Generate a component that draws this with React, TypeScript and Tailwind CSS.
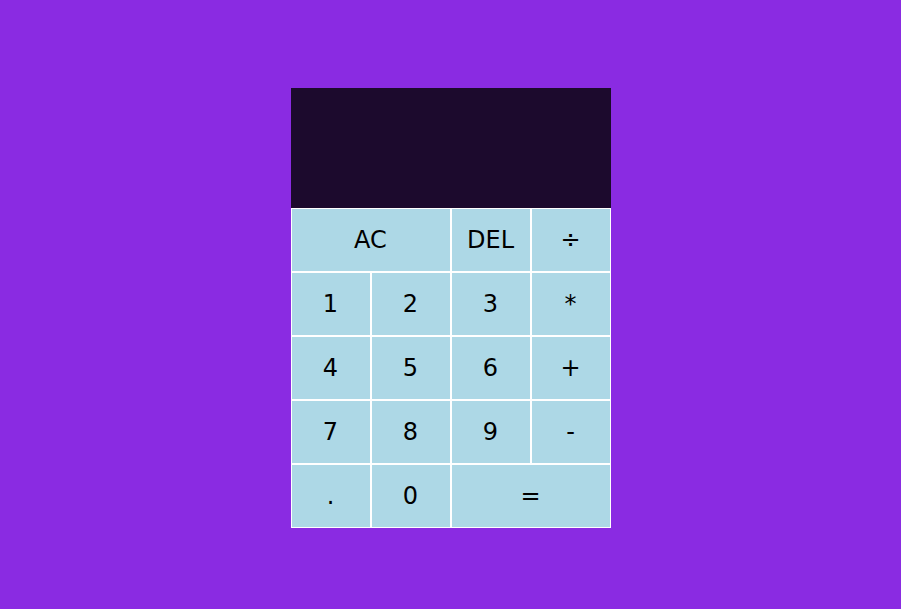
import React from "react";

const buttons: { label: string; span?: boolean }[] = [
  { label: "AC", span: true },
  { label: "DEL" },
  { label: "÷" },
  { label: "1" },
  { label: "2" },
  { label: "3" },
  { label: "*" },
  { label: "4" },
  { label: "5" },
  { label: "6" },
  { label: "+" },
  { label: "7" },
  { label: "8" },
  { label: "9" },
  { label: "-" },
  { label: "." },
  { label: "0" },
  { label: "=", span: true },
];

export default function App() {
  return (
    <div
      className="min-h-screen w-full bg-[#8a2be2] flex justify-center pt-[88px]"
      style={{ fontFamily: '"DejaVu Sans", sans-serif' }}
    >
      <div className="grid grid-cols-[repeat(4,80px)] grid-rows-[120px_repeat(5,64px)] h-fit">
        <div className="col-span-4 bg-[#1c0a2d]" />
        {buttons.map((b, i) => (
          <button
            key={i}
            className={`${b.span ? "col-span-2" : ""} border border-white bg-[#add8e6] text-black text-2xl leading-none flex items-center justify-center`}
          >
            {b.label}
          </button>
        ))}
      </div>
    </div>
  );
}
